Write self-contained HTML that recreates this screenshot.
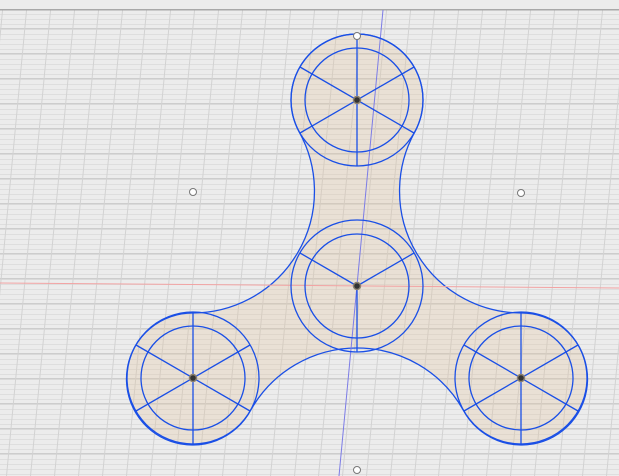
<!DOCTYPE html>
<html><head><meta charset="utf-8"><style>
html,body{margin:0;padding:0;background:#ececec;overflow:hidden}
svg{display:block}
</style></head><body>
<svg width="619" height="476" viewBox="0 0 619 476" xmlns="http://www.w3.org/2000/svg">
<defs>
<pattern id="h5" width="619" height="5" patternUnits="userSpaceOnUse" y="10">
<rect width="619" height="5" fill="#ececec"/><rect y="4" width="619" height="1" fill="#dedede"/>
</pattern>
<pattern id="h25" width="619" height="25" patternUnits="userSpaceOnUse" y="28">
<rect y="0" width="619" height="1.2" fill="#cdcdcd"/>
</pattern>
<pattern id="v" width="24" height="500" patternUnits="userSpaceOnUse" x="3" patternTransform="skewX(-5.4)">
<rect x="0" width="1" height="500" fill="#d2d2d2"/>
</pattern>
<g id="spk">
<line x1="0" y1="-66" x2="0" y2="66"/>
<line x1="-57" y1="-33" x2="57" y2="33"/>
<line x1="-57" y1="33" x2="57" y2="-33"/>
</g>
</defs>
<rect y="10" width="619" height="466" fill="url(#h5)"/>
<rect y="10" width="619" height="466" fill="url(#h25)"/>
<rect y="10" width="619" height="466" fill="url(#v)"/>
<rect y="9" width="619" height="1.5" fill="#a8a8a8"/>
<path d="M299.4,132.3 A122,122 0 0 1 193,313 A66,66 0 1 0 250.6,410.3 A122,122 0 0 1 463.4,410.3 A66,66 0 1 0 521,313 A122,122 0 0 1 414.6,132.3 A66,66 0 1 0 299.4,132.3 Z" fill="rgba(225,195,155,0.28)" stroke="#1a4fe6" stroke-width="1.3"/>
<line x1="0" y1="283" x2="619" y2="288" stroke="#f2a3a3" stroke-width="1"/>
<line x1="383" y1="10" x2="339" y2="476" stroke="#7c7ce6" stroke-width="1"/>
<g fill="none" stroke="#1a4fe6" stroke-width="1.3">
<circle cx="357" cy="100" r="66"/><circle cx="357" cy="100" r="52"/>
<circle cx="193" cy="378" r="66"/><circle cx="193" cy="378" r="52"/>
<circle cx="521" cy="378" r="66"/><circle cx="521" cy="378" r="52"/>
<circle cx="357" cy="286" r="66"/><circle cx="357" cy="286" r="52"/>
<use href="#spk" transform="translate(357,100)"/>
<use href="#spk" transform="translate(193,378)"/>
<use href="#spk" transform="translate(521,378)"/>
<line x1="357" y1="286" x2="357" y2="352"/>
<line x1="357" y1="286" x2="300" y2="253"/>
<line x1="357" y1="286" x2="414" y2="253"/>
</g>
<g fill="#333" stroke="#8a8070" stroke-width="1.5">
<circle cx="357" cy="100" r="3.5"/><circle cx="193" cy="378" r="3.5"/>
<circle cx="521" cy="378" r="3.5"/><circle cx="357" cy="286" r="3.5"/>
</g>
<g fill="#fff" stroke="#777" stroke-width="1">
<circle cx="193" cy="192" r="3.5"/><circle cx="521" cy="193" r="3.5"/>
<circle cx="357" cy="470" r="3.5"/><circle cx="357" cy="36" r="3.5"/>
</g>
</svg>
</body></html>
